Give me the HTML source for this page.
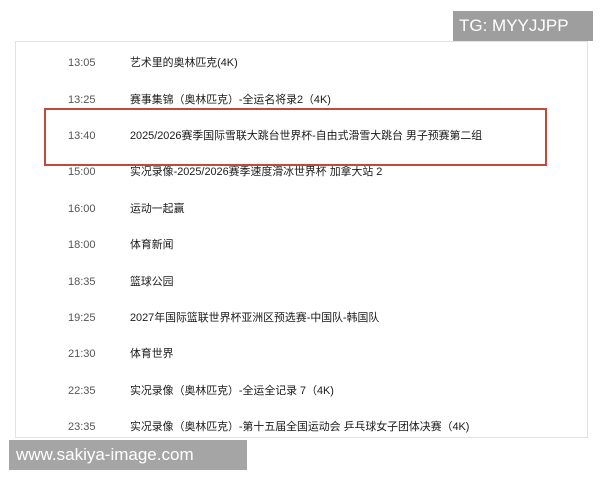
<!DOCTYPE html>
<html><head><meta charset="utf-8"><style>
body{margin:0;width:600px;height:480px;background:#fff;position:relative;overflow:hidden;font-family:"Liberation Sans","Noto Sans CJK SC",sans-serif;}
.panel{position:absolute;left:15px;top:41px;width:573px;height:397px;border:1px solid #e2e2e2;box-sizing:border-box;}
.row{position:absolute;left:0;height:20px;line-height:20px;font-size:10.9px;color:#1a1a1a;white-space:nowrap;}
.t{position:absolute;left:68px;color:#555;font-size:11px;}
.n{position:absolute;left:130px;}
.red{position:absolute;left:44px;top:108px;width:503px;height:58px;border:2px solid #c24a3a;box-sizing:border-box;}
.tg{position:absolute;left:453px;top:11px;width:140px;height:30px;background:#9e9e9e;color:#fff;font-size:17px;line-height:30px;padding-left:6px;box-sizing:border-box;}
.wm{position:absolute;left:9px;top:440px;width:238px;height:30px;background:#a5a5a5;color:#fff;font-size:17px;line-height:30px;padding-left:7px;box-sizing:border-box;}
</style></head><body>
<div class="panel"></div>
<div class="row" style="top:53px"><span class="t">13:05</span><span class="n">艺术里的奥林匹克(4K)</span></div>
<div class="row" style="top:90px"><span class="t">13:25</span><span class="n">赛事集锦（奥林匹克）-全运名将录2（4K)</span></div>
<div class="row" style="top:126px"><span class="t">13:40</span><span class="n">2025/2026赛季国际雪联大跳台世界杯-自由式滑雪大跳台 男子预赛第二组</span></div>
<div class="row" style="top:162px"><span class="t">15:00</span><span class="n">实况录像-2025/2026赛季速度滑冰世界杯 加拿大站 2</span></div>
<div class="row" style="top:199px"><span class="t">16:00</span><span class="n">运动一起赢</span></div>
<div class="row" style="top:235px"><span class="t">18:00</span><span class="n">体育新闻</span></div>
<div class="row" style="top:272px"><span class="t">18:35</span><span class="n">篮球公园</span></div>
<div class="row" style="top:308px"><span class="t">19:25</span><span class="n">2027年国际篮联世界杯亚洲区预选赛-中国队-韩国队</span></div>
<div class="row" style="top:344px"><span class="t">21:30</span><span class="n">体育世界</span></div>
<div class="row" style="top:381px"><span class="t">22:35</span><span class="n">实况录像（奥林匹克）-全运全记录 7（4K)</span></div>
<div class="row" style="top:417px"><span class="t">23:35</span><span class="n">实况录像（奥林匹克）-第十五届全国运动会 乒乓球女子团体决赛（4K)</span></div>
<div class="red"></div>
<div class="tg">TG: MYYJJPP</div>
<div class="wm">www.sakiya-image.com</div>
</body></html>
